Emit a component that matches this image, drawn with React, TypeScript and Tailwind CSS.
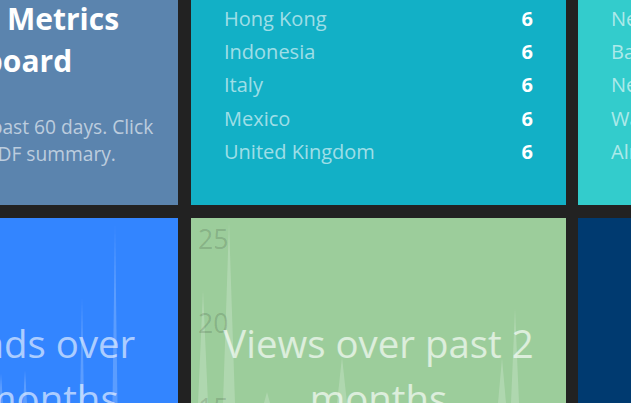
import React from "react";

type Spike = { x: number; y: number; hw: number };

function SpikeChart({ spikes, labels }: { spikes: Spike[]; labels?: { t: string; y: number }[] }) {
  const base = 375;
  return (
    <svg className="absolute inset-0" width="375" height="375" viewBox="0 0 375 375">
      {spikes.map((s, i) => {
        const k = (base - s.y) / (185 - s.y);
        const hw = s.hw * k;
        return (
          <polygon
            key={i}
            points={`${s.x},${s.y} ${s.x + hw},${base} ${s.x - hw},${base}`}
            fill="white"
            fillOpacity={0.2}
          />
        );
      })}
      {labels?.map((l) => (
        <text
          key={l.t}
          x={7}
          y={l.y}
          fontFamily="'Open Sans', sans-serif"
          fontSize={26.6}
          fill="black"
          fillOpacity={0.15}
        >
          {l.t}
        </text>
      ))}
    </svg>
  );
}

const countries = [
  ["Hong Kong", "6"],
  ["Indonesia", "6"],
  ["Italy", "6"],
  ["Mexico", "6"],
  ["United Kingdom", "6"],
];

const cities = [
  ["New York", "5"],
  ["Bangalore", "5"],
  ["New Delhi", "5"],
  ["Warsaw", "5"],
  ["Almaty", "5"],
];

function ListTile({ rows, bg }: { rows: string[][]; bg: string }) {
  return (
    <div className={`flex h-[375px] w-[375px] shrink-0 flex-col justify-end px-[33px] pb-[37px] ${bg}`}>
      {rows.map(([name, n]) => (
        <div key={name} className="flex justify-between text-[20px] leading-[33.2px]">
          <span className="text-white/60">{name}</span>
          <span className="font-bold text-white">{n}</span>
        </div>
      ))}
    </div>
  );
}

export default function App() {
  return (
    <div className="h-[403px] w-[631px] overflow-hidden bg-[#222222] font-['Open_Sans',sans-serif]">
      <div className="-ml-[197px] -mt-[170px] flex w-max flex-col gap-[13px]">
        <div className="flex">
          <div className="flex h-[375px] w-[375px] shrink-0 flex-col justify-end bg-[#5b84ae] px-4 pb-[38px] text-center">
            <h1 className="mb-[31px] text-[30px] font-bold leading-[42px] text-white">
              Analytics Metrics Dashboard
            </h1>
            <p className="text-[19.2px] leading-[27px] text-white/60">
              Statistics over the past 60 days. Click here to see a PDF summary.
            </p>
          </div>
          <div className="ml-[13px]">
            <ListTile rows={countries} bg="bg-[#12b0c6]" />
          </div>
          <div className="ml-3">
            <ListTile rows={cities} bg="bg-[#33cccc]" />
          </div>
        </div>
        <div className="flex">
          <div className="relative h-[375px] w-[375px] shrink-0 overflow-hidden bg-[#3385ff]">
            <SpikeChart
              spikes={[
                { x: 312, y: 5, hw: 2.5 },
                { x: 279, y: 79, hw: 2 },
                { x: 222, y: 152, hw: 2 },
                { x: 198, y: 155, hw: 2 },
              ]}
            />
            <div className="relative px-4 pt-[98px] text-center text-[38.4px] leading-[55px] text-white/60">
              Downloads over past 2 months
            </div>
          </div>
          <div className="relative ml-[13px] h-[375px] w-[375px] shrink-0 overflow-hidden bg-[#9ccd9b]">
            <SpikeChart
              spikes={[
                { x: 38, y: 4, hw: 6 },
                { x: 12, y: 72, hw: 5 },
                { x: 76, y: 174, hw: 3 },
                { x: 151, y: 139, hw: 5 },
                { x: 324, y: 90, hw: 4 },
                { x: 311, y: 140, hw: 4 },
              ]}
              labels={[
                { t: "25", y: 30.5 },
                { t: "20", y: 115 },
                { t: "15", y: 199.5 },
              ]}
            />
            <div className="relative px-4 pt-[98px] text-center text-[38.4px] leading-[55px] text-white/65">
              Views over past 2 months
            </div>
          </div>
          <div className="ml-3 h-[375px] w-[375px] shrink-0 bg-[#003a70]" />
        </div>
      </div>
    </div>
  );
}
